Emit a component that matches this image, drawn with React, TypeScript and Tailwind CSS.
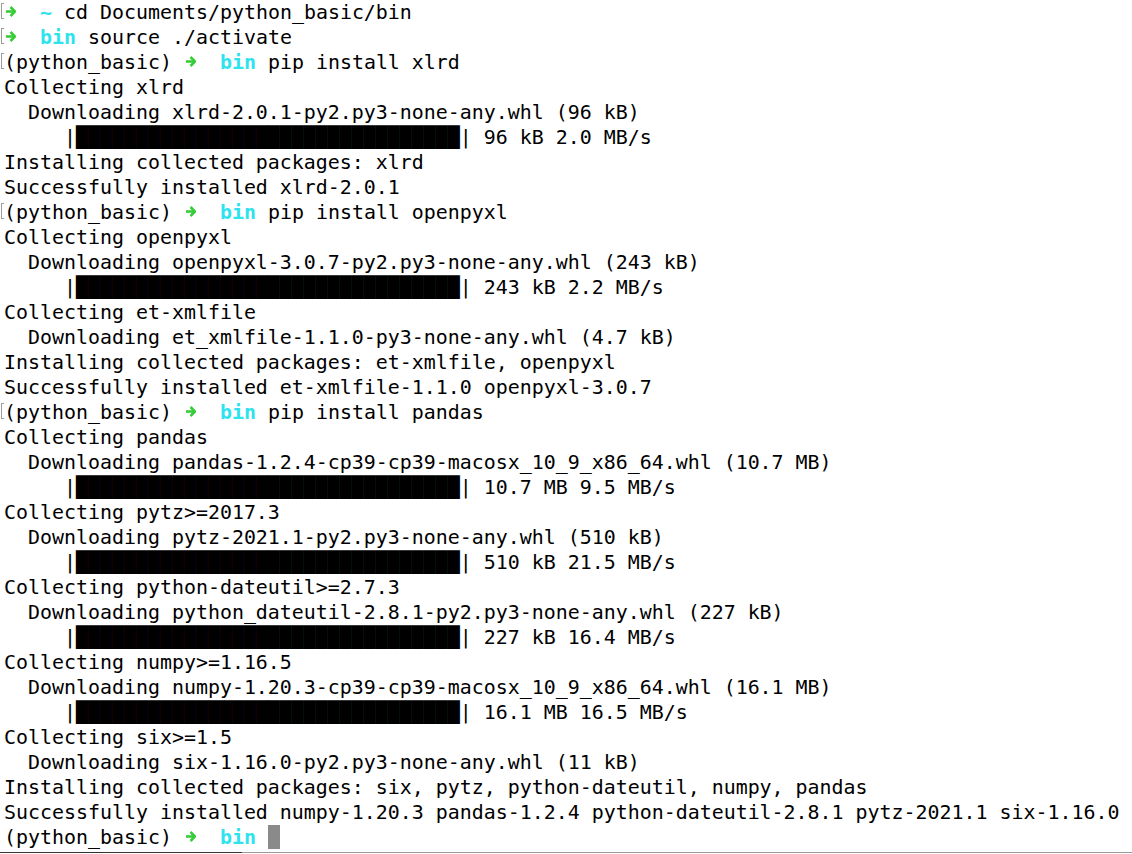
type Seg = { t: string; c?: "g" | "c" | "bar" | "cursor" };
type Line = { mark?: boolean; segs: Seg[] };

const prompt = (cmd: string, mark = true): Line => ({
  mark,
  segs: [
    { t: "(python_basic) " },
    { t: "➜", c: "g" },
    { t: "  " },
    { t: "bin", c: "c" },
    { t: cmd },
  ],
});

const plain = (t: string): Line => ({ segs: [{ t }] });

const bar = (t: string): Line => ({
  segs: [{ t: "     |" }, { t: "█".repeat(32), c: "bar" }, { t: "| " + t }],
});

const lines: Line[] = [
  {
    mark: true,
    segs: [{ t: "➜", c: "g" }, { t: "  " }, { t: "~", c: "c" }, { t: " cd Documents/python_basic/bin" }],
  },
  {
    mark: true,
    segs: [{ t: "➜", c: "g" }, { t: "  " }, { t: "bin", c: "c" }, { t: " source ./activate" }],
  },
  prompt(" pip install xlrd"),
  plain("Collecting xlrd"),
  plain("  Downloading xlrd-2.0.1-py2.py3-none-any.whl (96 kB)"),
  bar("96 kB 2.0 MB/s"),
  plain("Installing collected packages: xlrd"),
  plain("Successfully installed xlrd-2.0.1"),
  prompt(" pip install openpyxl"),
  plain("Collecting openpyxl"),
  plain("  Downloading openpyxl-3.0.7-py2.py3-none-any.whl (243 kB)"),
  bar("243 kB 2.2 MB/s"),
  plain("Collecting et-xmlfile"),
  plain("  Downloading et_xmlfile-1.1.0-py3-none-any.whl (4.7 kB)"),
  plain("Installing collected packages: et-xmlfile, openpyxl"),
  plain("Successfully installed et-xmlfile-1.1.0 openpyxl-3.0.7"),
  prompt(" pip install pandas"),
  plain("Collecting pandas"),
  plain("  Downloading pandas-1.2.4-cp39-cp39-macosx_10_9_x86_64.whl (10.7 MB)"),
  bar("10.7 MB 9.5 MB/s"),
  plain("Collecting pytz>=2017.3"),
  plain("  Downloading pytz-2021.1-py2.py3-none-any.whl (510 kB)"),
  bar("510 kB 21.5 MB/s"),
  plain("Collecting python-dateutil>=2.7.3"),
  plain("  Downloading python_dateutil-2.8.1-py2.py3-none-any.whl (227 kB)"),
  bar("227 kB 16.4 MB/s"),
  plain("Collecting numpy>=1.16.5"),
  plain("  Downloading numpy-1.20.3-cp39-cp39-macosx_10_9_x86_64.whl (16.1 MB)"),
  bar("16.1 MB 16.5 MB/s"),
  plain("Collecting six>=1.5"),
  plain("  Downloading six-1.16.0-py2.py3-none-any.whl (11 kB)"),
  plain("Installing collected packages: six, pytz, python-dateutil, numpy, pandas"),
  plain("Successfully installed numpy-1.20.3 pandas-1.2.4 python-dateutil-2.8.1 pytz-2021.1 six-1.16.0"),
  {
    segs: [
      { t: "(python_basic) " },
      { t: "➜", c: "g" },
      { t: "  " },
      { t: "bin", c: "c" },
      { t: " " },
      { t: "", c: "cursor" },
    ],
  },
];

// zsh prompt arrow, drawn so its weight matches the terminal's glyph
function Arrow() {
  return (
    <svg
      viewBox="0 0 12 25"
      aria-label="➜"
      className="inline-block h-[25px] w-[12.04px] align-top text-[#36cd38]"
    >
      <path d="M2 11.5H10.5" stroke="currentColor" strokeWidth="2.6" fill="none" />
      <path d="M6.5 7L11 11.5L6.5 16" stroke="currentColor" strokeWidth="2.6" fill="none" />
    </svg>
  );
}

function Segment({ seg }: { seg: Seg }) {
  if (seg.c === "g") return <Arrow />;
  if (seg.c === "c") return <span className="font-bold text-[#2fe3ee]">{seg.t}</span>;
  if (seg.c === "bar") return <span className="text-black">{seg.t}</span>;
  if (seg.c === "cursor")
    return <span className="inline-block h-[24px] w-[12px] align-top bg-[#8a8a8a]" />;
  return <span>{seg.t}</span>;
}

export default function App() {
  return (
    <div className="flex h-[854px] w-[1132px] flex-col overflow-hidden bg-white text-black">
      <div className="flex flex-col font-['DejaVu_Sans_Mono','Liberation_Mono',monospace] text-[19.93px] leading-[25px]">
        {lines.map((line, i) => (
          <div key={i} className="flex h-[25px]">
            <div className="w-[4px] shrink-0">
              {line.mark && (
                <div className="ml-[1px] mt-[3px] h-[16px] w-[3px] border-y border-l border-[#9a9a9a]" />
              )}
            </div>
            <div className="whitespace-pre">
              {line.segs.map((s, j) => (
                <Segment key={j} seg={s} />
              ))}
            </div>
          </div>
        ))}
      </div>
      <div className="mt-auto mb-[1px] flex h-[1px]">
        <div className="w-[242px] bg-[#333]" />
        <div className="flex-1 bg-[#9a9a9a]" />
      </div>
    </div>
  );
}
